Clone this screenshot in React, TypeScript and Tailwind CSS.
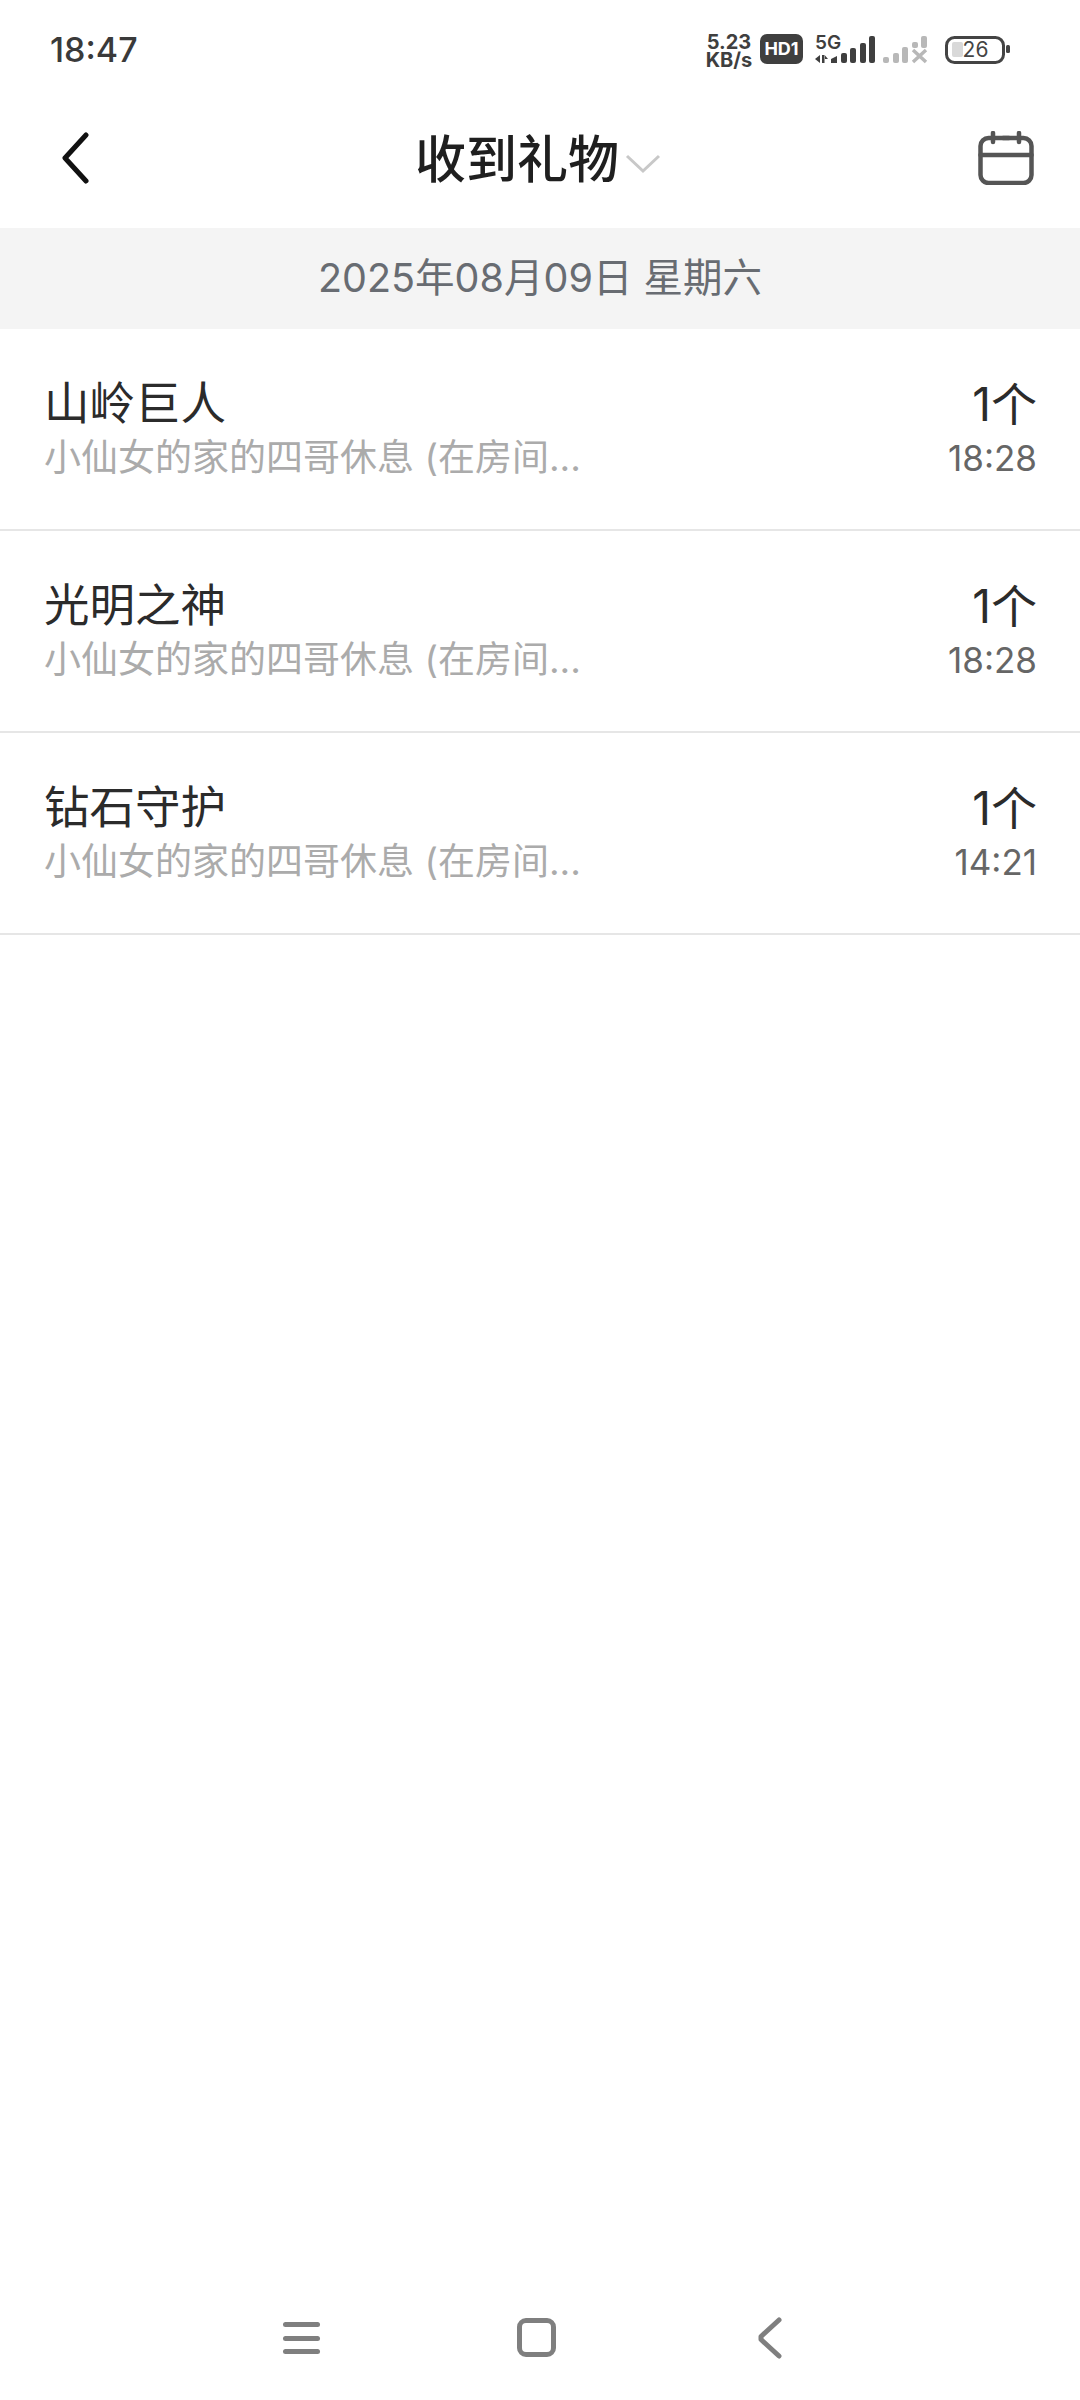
const font = { fontFamily: 'Inter,"Noto Sans CJK SC",sans-serif' };

const rows = [
  { name: "山岭巨人", time: "18:28" },
  { name: "光明之神", time: "18:28" },
  { name: "钻石守护", time: "14:21" },
];

function StatusIcons() {
  return (
    <svg width="310" height="40" viewBox="0 0 310 40" className="block">
      <rect x="56" y="4" width="43" height="30" rx="7" fill="#3f3f3f" />
      <g fill="#3f3f3f">
        <path d="M111 29l5-4v8zM118 25h2.5v8H118zM121 25.5l3 3.5h-3z" />
        <path d="M127 29l6-3v7h-6z" />
        <rect x="137" y="23" width="6" height="10" rx="2" />
        <rect x="146" y="18" width="6" height="15" rx="2" />
        <rect x="156" y="13" width="6" height="20" rx="2" />
        <rect x="165" y="6" width="6" height="27" rx="2" />
      </g>
      <g fill="#b8b8b8">
        <rect x="179" y="27" width="6" height="6" rx="2" />
        <rect x="189" y="23" width="6" height="10" rx="2" />
        <rect x="198" y="17" width="6" height="16" rx="2" />
        <rect x="208" y="12" width="6" height="6" rx="2" />
        <rect x="217" y="6" width="6" height="12" rx="2" />
      </g>
      <path d="M209 20l13 12M222 20l-13 12" stroke="#b8b8b8" strokeWidth="3.5" />
      <rect x="242.5" y="7.5" width="57" height="25" rx="8" fill="none" stroke="#444" strokeWidth="3" />
      <rect x="248" y="12" width="11" height="15" rx="2" fill="#d9d9d9" />
      <rect x="302" y="15" width="4" height="8" rx="1.5" fill="#444" />
    </svg>
  );
}

export default function App() {
  return (
    <div className="w-[1080px] h-[2400px] bg-white flex flex-col overflow-hidden" style={font}>
      <div className="h-[100px] flex items-center justify-between pl-[50px] pr-[66px]">
        <span className="text-[34px] leading-none font-medium text-[#3a3a3a]">18:47</span>
        <div className="relative">
          <StatusIcons />
          <span className="absolute left-0 top-[3px] w-[50px] text-[20px] leading-[18px] font-bold text-[#3f3f3f] text-center">
            5.23
            <br />
            KB/s
          </span>
          <span className="absolute left-[56px] w-[43px] text-center top-[9px] text-[18px] leading-[20px] font-bold text-white">HD1</span>
          <span className="absolute left-[111px] top-[4px] text-[19px] leading-[18px] font-semibold text-[#3f3f3f]">5G</span>
          <span className="absolute left-[242px] top-[7px] w-[57px] text-center text-[21px] leading-[26px] text-[#444] pl-[2px]">26</span>
        </div>
      </div>

      <div className="h-[128px] flex items-center justify-between pl-[60px] pr-[46px]">
        <svg width="30" height="52" viewBox="0 0 30 52" className="block mt-[-12px]">
          <path d="M26 3L5 26l21 23" fill="none" stroke="#111" strokeWidth="5" strokeLinecap="round" strokeLinejoin="round" />
        </svg>
        <div className="flex items-center ml-[8px]">
          <span className="text-[51px] leading-none font-medium text-[#1f1f1f] mt-[-10px]">收到礼物</span>
          <svg width="36" height="20" viewBox="0 0 36 20" className="block ml-[6px] mt-[-1px]">
            <path d="M2 2l16 15L34 2" fill="none" stroke="#c8c8c8" strokeWidth="3" />
          </svg>
        </div>
        <svg width="56" height="54" viewBox="0 0 56 54" className="block mt-[-12px]">
          <g fill="none" stroke="#555" strokeWidth="4.5" strokeLinecap="round">
            <rect x="2.5" y="7" width="51" height="45" rx="8" />
            <path d="M2.5 24h51" />
            <path d="M15 2v9M41 2v9M25 7h6" />
          </g>
        </svg>
      </div>

      <div className="h-[101px] bg-[#f4f4f4] flex items-center justify-center text-[39.5px] leading-none text-[#686c72]">
        2025年08月09日 星期六
      </div>

      {rows.map((row) => (
        <div key={row.name} className="h-[202px] border-b-2 border-[#e6e6e6] pl-[44px] pr-[43px] pt-[48px] flex justify-between">
          <div className="flex flex-col">
            <span className="text-[45.5px] leading-[54px] text-[#2b2b2b]">{row.name}</span>
            <span className="text-[37px] leading-[50px] text-[#ababab] mt-[2px]">小仙女的家的四哥休息 (在房间...</span>
          </div>
          <div className="flex flex-col items-end">
            <span className="text-[46px] leading-[54px] text-[#2b2b2b]">1个</span>
            <span className="text-[35px] leading-[50px] text-[#666666] mt-[2px]">{row.time}</span>
          </div>
        </div>
      ))}

      <div className="flex-1" />

      <div className="h-[120px] flex items-start">
        <div className="ml-[283px] mt-[42px] flex flex-col gap-[8.5px] w-[37px]">
          <div className="h-[5px] rounded-full bg-[#7f7f7f]" />
          <div className="h-[5px] rounded-full bg-[#7f7f7f]" />
          <div className="h-[5px] rounded-full bg-[#7f7f7f]" />
        </div>
        <div className="ml-[197px] mt-[38px] w-[39px] h-[39px] rounded-[9px] border-[5px] border-[#7f7f7f]" />
        <svg width="26" height="42" viewBox="0 0 26 42" className="block ml-[201px] mt-[37px]">
          <path d="M22 3L4 19.5v3L22 39" fill="none" stroke="#7f7f7f" strokeWidth="5" strokeLinecap="round" strokeLinejoin="round" />
        </svg>
      </div>
    </div>
  );
}
